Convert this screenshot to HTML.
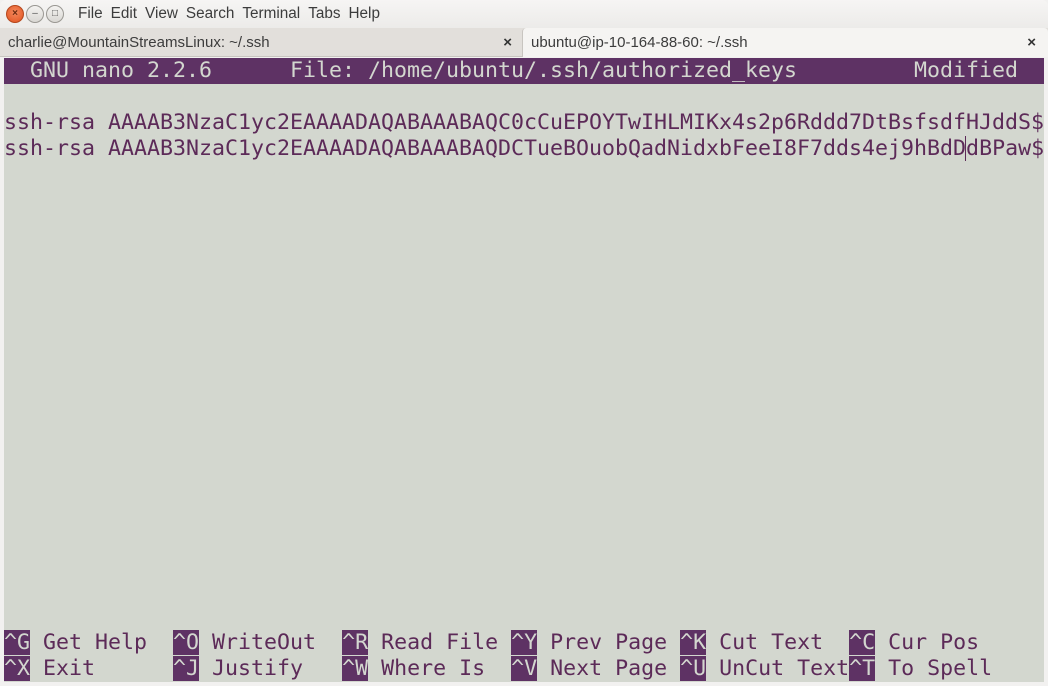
<!DOCTYPE html>
<html><head><meta charset="utf-8"><style>
*{margin:0;padding:0;box-sizing:border-box}
body{width:1048px;height:686px;background:#f2f1f0;position:relative;overflow:hidden;font-family:"Liberation Sans",sans-serif}
#menu{position:absolute;left:0;top:0;width:1048px;height:28px;background:linear-gradient(#f6f5f4,#ecebe9);border-radius:6px 6px 0 0}
.btn{position:absolute;top:5px;width:18px;height:18px;border-radius:50%;border:1px solid #9a9893;background:linear-gradient(#f4f3f1,#d9d7d3);font-size:10px;line-height:16px;text-align:center;color:#555}
#menu .items{position:absolute;left:78px;top:5px;font-size:15.3px;color:#3c3c3c}
#menu .items span{margin-right:8px}
#tabs{position:absolute;left:0;top:28px;width:1048px;height:29px;background:#e2dfdb;border-bottom:1px solid #c8c5c0}
.tab{position:absolute;top:0;height:29px;font-size:15px;color:#3c3c3c;line-height:29px}
#term{position:absolute;left:4px;top:58px;width:1040px;height:624px;background:#d3d7cf;font-family:"DejaVu Sans Mono","Liberation Mono",monospace;font-size:21.6px;color:#5c2a58;white-space:pre;line-height:26px}
.r{position:absolute;left:0;height:26px;width:1040px;overflow:hidden}
.hl{background:#5e3264;color:#d3d7cf}
</style></head><body>
<div id="menu">
<div class="btn" style="left:6px;background:radial-gradient(circle at 50% 40%,#f58a5e,#e0521f);border-color:#b5471c;color:#6a2a10;font-weight:bold">×</div>
<div class="btn" style="left:26px">–</div>
<div class="btn" style="left:46px">□</div>
<div class="items"><span>File</span><span>Edit</span><span>View</span><span>Search</span><span>Terminal</span><span>Tabs</span><span>Help</span></div>
</div>
<div id="tabs">
<div class="tab" style="left:0;width:522px;padding-left:8px">charlie@MountainStreamsLinux: ~/.ssh<span style="position:absolute;right:10px;font-weight:bold;color:#333">×</span></div>
<div class="tab" style="left:522px;width:526px;background:#f5f4f2;padding-left:8px;border-left:1px solid #c8c5c0;border-radius:4px 4px 0 0">ubuntu@ip-10-164-88-60: ~/.ssh<span style="position:absolute;right:12px;font-weight:bold;color:#333">×</span></div>
</div>
<div id="term">
<div class="r hl" style="top:0">  GNU nano 2.2.6      File: /home/ubuntu/.ssh/authorized_keys         Modified  </div>
<div class="r" style="top:52px">ssh-rsa AAAAB3NzaC1yc2EAAAADAQABAAABAQC0cCuEPOYTwIHLMIKx4s2p6Rddd7DtBsfsdfHJddS$</div>
<div class="r" style="top:78px">ssh-rsa AAAAB3NzaC1yc2EAAAADAQABAAABAQDCTueBOuobQadNidxbFeeI8F7dds4ej9hBdD<span style="border-left:1.5px solid #5c2a58;margin-left:-1px">d</span>BPaw$</div>
<div class="r" style="top:572px"><span class="hl">^G</span> Get Help  <span class="hl">^O</span> WriteOut  <span class="hl">^R</span> Read File <span class="hl">^Y</span> Prev Page <span class="hl">^K</span> Cut Text  <span class="hl">^C</span> Cur Pos</div>
<div class="r" style="top:598px"><span class="hl">^X</span> Exit      <span class="hl">^J</span> Justify   <span class="hl">^W</span> Where Is  <span class="hl">^V</span> Next Page <span class="hl">^U</span> UnCut Text<span class="hl">^T</span> To Spell</div>
</div>
</body></html>
